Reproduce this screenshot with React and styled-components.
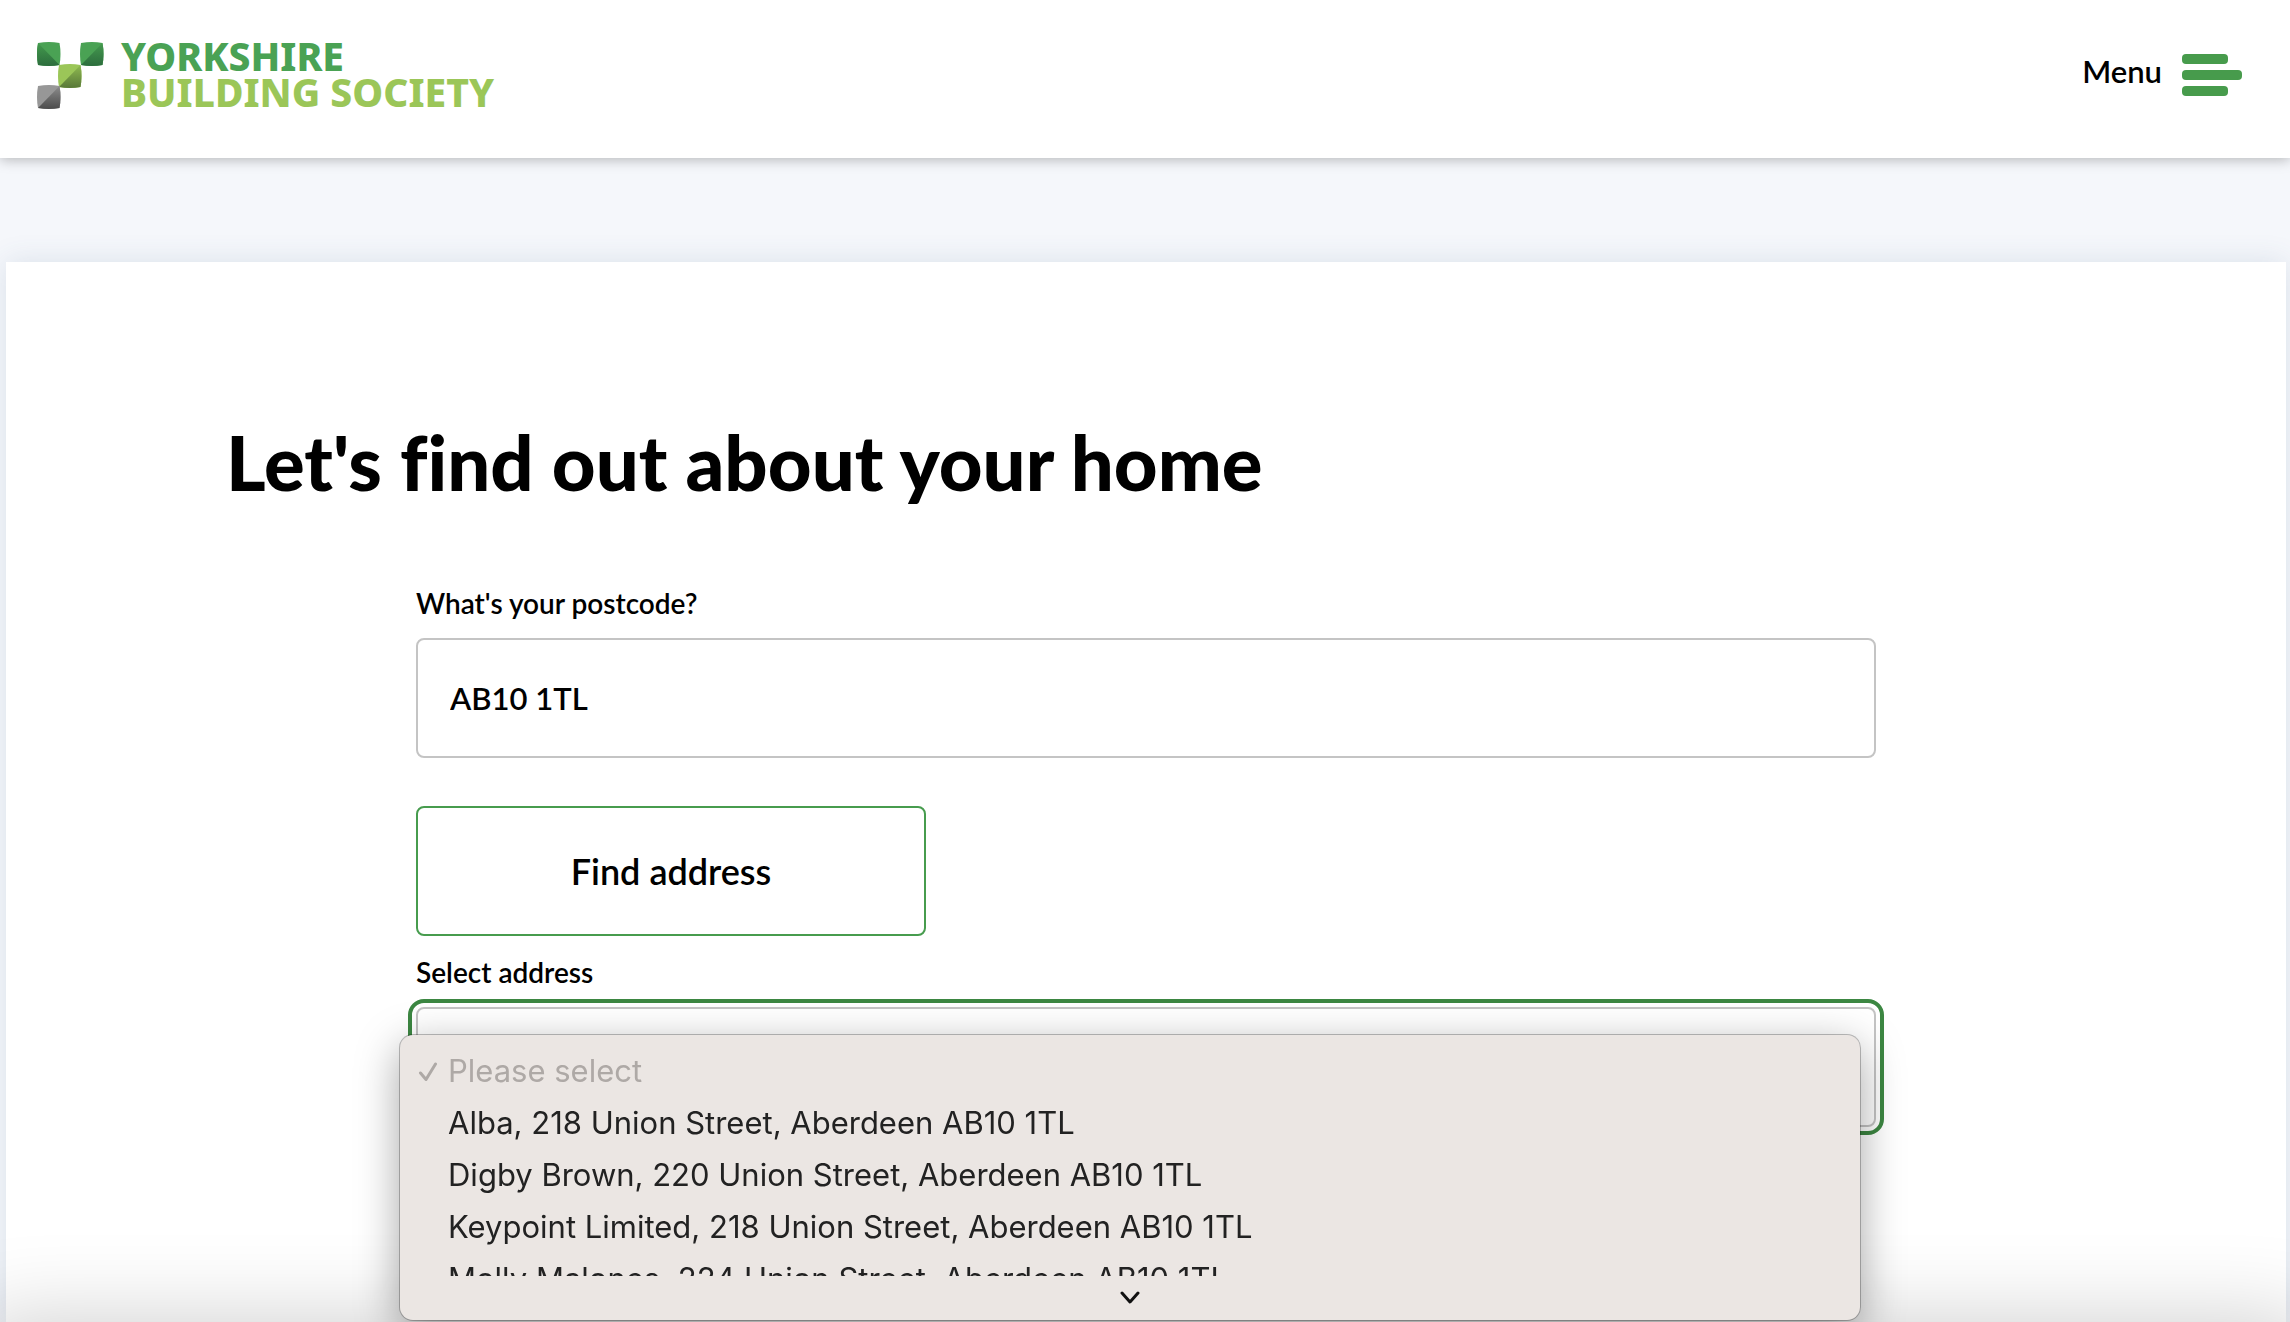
import React, { useState } from 'react';
import styled, { createGlobalStyle } from 'styled-components';

const GlobalStyle = createGlobalStyle`
  *, *::before, *::after { box-sizing: border-box; }
  body {
    margin: 0;
    background: #f5f7fb;
    color: #000;
    font-family: Lato, "Liberation Sans", sans-serif;
    font-variant-ligatures: none;
  }
`;

const Page = styled.div`
  display: flex;
  flex-direction: column;
  min-height: 100vh;
`;

const Header = styled.header`
  position: relative;
  display: flex;
  justify-content: space-between;
  align-items: flex-start;
  min-height: 158px;
  padding: 38px 48px 0 37px;
  background: #fff;
  box-shadow: 0 2px 12px rgba(0, 0, 0, 0.26);
`;

const Logo = styled.a`
  display: flex;
  gap: 17px;
  text-decoration: none;
`;

const LogoText = styled.span`
  display: flex;
  flex-direction: column;
  font-family: "Noto Sans", "Open Sans", sans-serif;
  font-size: 39px;
  font-weight: 800;
  line-height: 36px;
`;

const LogoLine = styled.span`
  color: ${({ $light }) => ($light ? '#9bc658' : '#4aa254')};
`;

const MenuButton = styled.button`
  display: flex;
  align-items: center;
  gap: 20px;
  height: 72px;
  padding: 0;
  border: 0;
  background: none;
  color: #000;
  font: inherit;
  font-size: 31px;
  font-weight: 600;
  line-height: 36px;
`;

const MenuLabel = styled.span`
  padding-bottom: 6px;
`;

const Main = styled.main`
  display: flex;
  flex: 1;
  flex-direction: column;
  padding: 104px 4px 0 6px;
`;

const Card = styled.section`
  flex: 1;
  padding: 156px 24px 60px;
  background: #fff;
  box-shadow: 0 0 28px rgba(60, 90, 130, 0.14);
`;

const Title = styled.h1`
  max-width: 1840px;
  margin: 0 auto 80px;
  font-size: 76px;
  font-weight: 900;
  line-height: 88px;
`;

const Form = styled.form`
  max-width: 1460px;
  margin: 0 auto;
`;

const Label = styled.label`
  display: block;
  margin-bottom: 18px;
  font-size: 28px;
  font-weight: 600;
  line-height: 34px;
`;

const TextInput = styled.input`
  display: block;
  width: 100%;
  height: 120px;
  padding: 0 32px;
  border: 2px solid #c4c4c4;
  border-radius: 8px;
  background: #fff;
  color: #000;
  font: inherit;
  font-size: 31px;
  font-weight: 600;
`;

const FindButton = styled.button`
  display: block;
  width: 510px;
  max-width: 100%;
  height: 130px;
  margin: 48px 0 19px;
  border: 2px solid #479c4e;
  border-radius: 8px;
  background: #fff;
  color: #000;
  font: inherit;
  font-size: 36px;
  font-weight: 600;
`;

const SelectField = styled.div`
  position: relative;
`;

const AddressSelect = styled.select`
  display: block;
  width: 100%;
  height: 120px;
  padding: 0 32px;
  appearance: none;
  border: 2px solid #c4c4c4;
  border-radius: 8px;
  outline: 4px solid #3c8742;
  outline-offset: 4px;
  background: #fff;
  color: #000;
  font: inherit;
  font-size: 31px;
`;

const Popup = styled.div`
  position: absolute;
  z-index: 2;
  top: 28px;
  left: -16px;
  width: 100%;
  padding-top: 10px;
  border-radius: 13px;
  background: #ebe6e3;
  box-shadow: 0 0 0 1px rgba(0, 0, 0, 0.25), 0 12px 44px rgba(0, 0, 0, 0.36);
  color: #222;
  font-family: Inter, "Liberation Sans", sans-serif;
  font-size: 31px;
  line-height: 52px;
`;

const OptionList = styled.ul`
  height: 231px;
  margin: 0;
  padding: 0 18px;
  overflow: hidden;
  list-style: none;
`;

const Option = styled.li`
  display: grid;
  grid-template-columns: 30px 1fr;
  align-items: center;
  color: ${({ $muted }) => ($muted ? '#aea9a6' : 'inherit')};
`;

const OptionText = styled.span`
  grid-column: 2;
`;

const ScrollHint = styled.div`
  display: flex;
  justify-content: center;
  align-items: center;
  height: 44px;
`;

const BottomShade = styled.div`
  position: fixed;
  right: -24px;
  bottom: -120px;
  left: -24px;
  height: 120px;
  box-shadow: 0 0 90px rgba(0, 0, 0, 0.2);
  pointer-events: none;
`;

const TILE = 'M1 1Q12 -1 22.500 1Q24.500 12 22.500 23Q12 25 1 23Q-1 12 1 1Z';
const LOWER_RIGHT = 'M1 23L22.500 1Q24.500 12 22.500 23Q12 25 1 23Z';
const LOWER_LEFT = 'M1 1L22.500 23Q12 25 1 23Q-1 12 1 1Z';

const tiles = [
  { id: 'a', x: 0, y: 4, light: '#4aa254', dark: '#2c6d3d', mid: '#439a4d', half: LOWER_LEFT },
  { id: 'b', x: 43, y: 4, light: '#4aa254', dark: '#2c6d3d', mid: '#459a4f', half: LOWER_RIGHT },
  { id: 'c', x: 21, y: 26, light: '#9bc658', dark: '#587838', mid: '#8fba50', half: LOWER_RIGHT },
  { id: 'd', x: 0, y: 47, light: '#979797', dark: '#4b4b4b', mid: '#8c8c8c', half: LOWER_RIGHT },
];

function LogoMark() {
  return (
    <svg width="67" height="74" viewBox="0 0 67 74" aria-hidden="true">
      <defs>
        {tiles.map((t) => (
          <linearGradient key={t.id} id={`tile-${t.id}`} x1="0" y1="0" x2="0" y2="1">
            <stop offset="0" stopColor={t.mid} />
            <stop offset="1" stopColor={t.dark} />
          </linearGradient>
        ))}
      </defs>
      {tiles.map((t) => (
        <g key={t.id} transform={`translate(${t.x} ${t.y})`}>
          <path d={TILE} fill={t.light} />
          <path d={t.half} fill={`url(#tile-${t.id})`} />
        </g>
      ))}
    </svg>
  );
}

function MenuIcon() {
  return (
    <svg width="60" height="46" viewBox="0 0 60 46" fill="#479b4c" aria-hidden="true">
      <rect y="3" width="46" height="10" rx="4" />
      <rect y="19" width="60" height="10" rx="4" />
      <rect y="35" width="46" height="10" rx="4" />
    </svg>
  );
}

function CheckIcon() {
  return (
    <svg width="20" height="20" viewBox="0 0 20 20" fill="none" stroke="currentColor" strokeWidth="3" strokeLinecap="round" strokeLinejoin="round" aria-hidden="true">
      <path d="M2.500 12L8 18.500L17.500 3" />
    </svg>
  );
}

function ChevronIcon() {
  return (
    <svg width="20" height="14" viewBox="0 0 20 14" fill="none" stroke="#111" strokeWidth="3" strokeLinecap="round" strokeLinejoin="round" aria-hidden="true">
      <path d="M2 2L10 11L18 2" />
    </svg>
  );
}

const addresses = [
  'Alba, 218 Union Street, Aberdeen AB10 1TL',
  'Digby Brown, 220 Union Street, Aberdeen AB10 1TL',
  'Keypoint Limited, 218 Union Street, Aberdeen AB10 1TL',
  'Molly Malones, 224 Union Street, Aberdeen AB10 1TL',
];

export default function App() {
  const [postcode, setPostcode] = useState('AB10 1TL');

  return (
    <Page>
      <GlobalStyle />
      <Header>
        <Logo href="#">
          <LogoMark />
          <LogoText>
            <LogoLine>YORKSHIRE</LogoLine>
            <LogoLine $light>BUILDING SOCIETY</LogoLine>
          </LogoText>
        </Logo>
        <MenuButton type="button">
          <MenuLabel>Menu</MenuLabel>
          <MenuIcon />
        </MenuButton>
      </Header>
      <Main>
        <Card>
          <Title>Let's find out about your home</Title>
          <Form onSubmit={(e) => e.preventDefault()}>
            <Label htmlFor="postcode">What's your postcode?</Label>
            <TextInput id="postcode" value={postcode} onChange={(e) => setPostcode(e.target.value)} />
            <FindButton type="submit">Find address</FindButton>
            <Label htmlFor="address">Select address</Label>
            <SelectField>
              <AddressSelect id="address" defaultValue="">
                <option value="" disabled aria-label="Please select" />
                {addresses.map((a) => (
                  <option key={a}>{a}</option>
                ))}
              </AddressSelect>
              <Popup>
                <OptionList role="listbox" aria-label="Select address">
                  <Option $muted role="option" aria-selected="true" aria-disabled="true">
                    <CheckIcon />
                    <OptionText>Please select</OptionText>
                  </Option>
                  {addresses.map((a) => (
                    <Option key={a} role="option" aria-selected="false">
                      <OptionText>{a}</OptionText>
                    </Option>
                  ))}
                </OptionList>
                <ScrollHint>
                  <ChevronIcon />
                </ScrollHint>
              </Popup>
            </SelectField>
          </Form>
        </Card>
      </Main>
      <BottomShade />
    </Page>
  );
}
